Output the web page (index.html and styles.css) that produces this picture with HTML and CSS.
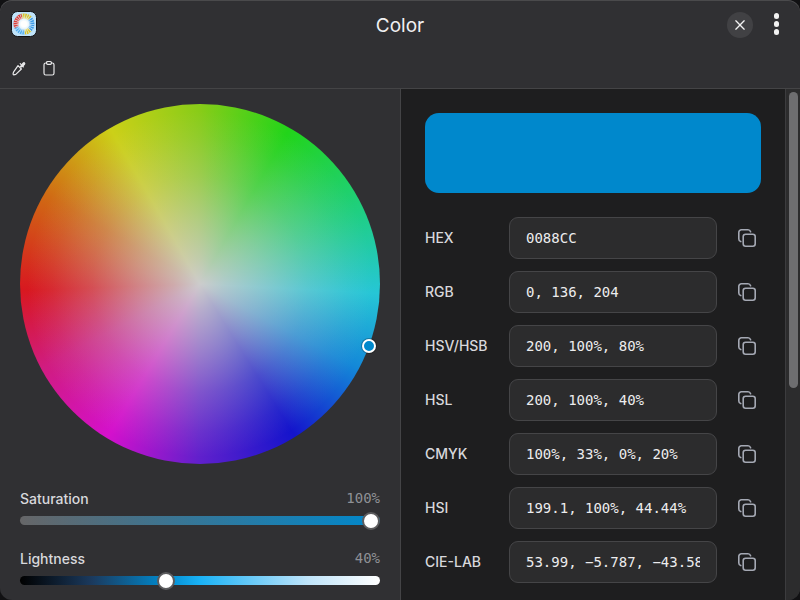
FILE: index.html
```html
<!DOCTYPE html>
<html lang="en">
<head>
<meta charset="utf-8">
<title>Color</title>
<link rel="stylesheet" href="styles.css">
</head>
<body>
<div class="window">
  <header class="titlebar">
    <div class="title-left">
      <svg class="app-icon" viewBox="0 0 26 26" width="26" height="26">
        <defs>
          <radialGradient id="glow">
            <stop offset="0.35" stop-color="#ffffff"/>
            <stop offset="1" stop-color="#ffffff" stop-opacity="0"/>
          </radialGradient>
        </defs>
        <rect x="0.5" y="0.5" width="25" height="25" rx="6" fill="#bfe3fa" stroke="#111113"/>
        <g fill="none" stroke-width="5">
          <circle cx="13" cy="13" r="8" stroke="#dc3b36" pathLength="100" stroke-dasharray="28 72" stroke-dashoffset="-43"/>
          <circle cx="13" cy="13" r="8" stroke="#d9c227" pathLength="100" stroke-dasharray="17 83" stroke-dashoffset="-71"/>
          <circle cx="13" cy="13" r="8" stroke="#3c9be8" pathLength="100" stroke-dasharray="24 76" stroke-dashoffset="12"/>
          <circle cx="13" cy="13" r="8" stroke="#d9c227" pathLength="100" stroke-dasharray="12 88" stroke-dashoffset="-12"/>
          <circle cx="13" cy="13" r="8" stroke="#52aef0" pathLength="100" stroke-dasharray="19 81" stroke-dashoffset="-24"/>
          <circle cx="13" cy="13" r="8" stroke="#d4ecfb" pathLength="50" stroke-dasharray="0.6 1.4"/>
        </g>
        <circle cx="13" cy="13" r="8" fill="url(#glow)"/>
      </svg>
    </div>
    <h1 class="title">Color</h1>
    <div class="title-actions">
      <button class="close" aria-label="Close">
        <svg viewBox="0 0 12 12" width="10" height="10"><path d="M1 1l10 10M11 1L1 11" stroke="#f2f2f2" stroke-width="1.6" stroke-linecap="round"/></svg>
      </button>
      <div class="kebab"><span></span><span></span><span></span></div>
    </div>
  </header>
  <div class="toolbar">
    <svg viewBox="0 0 16 16" width="16" height="16" fill="none" stroke="#e8e8ea" stroke-width="1.2" stroke-linejoin="round" stroke-linecap="round">
      <path d="M9.2 3.6l3.2 3.2M7 5.6l3.4 3.4-5.6 5.4-2.1.5-.7-.7.5-2.1z"/>
      <path d="M9.5 6.5l2-2.6c.8-1 1.4-1.5 2-1 .6.5.2 1.3-.7 2.1l-2.2 2z" fill="#e8e8ea"/>
    </svg>
    <svg viewBox="0 0 16 16" width="16" height="16" fill="none" stroke="#e8e8ea" stroke-width="1.2" stroke-linejoin="round">
      <rect x="3" y="3" width="10" height="12" rx="1.8"/>
      <rect x="5.6" y="1.5" width="4.8" height="2.8" rx="1" fill="#303033"/>
    </svg>
  </div>
  <main class="content">
    <section class="picker">
      <div class="wheel"><span class="wheel-handle"></span></div>
      <div class="slider-block sat">
        <div class="slider-head"><span>Saturation</span><span class="slider-val">100%</span></div>
        <div class="track track-sat"><span class="thumb thumb-sat"></span></div>
      </div>
      <div class="slider-block">
        <div class="slider-head"><span>Lightness</span><span class="slider-val">40%</span></div>
        <div class="track track-light"><span class="thumb thumb-light"></span></div>
      </div>
    </section>
    <section class="values">
      <div class="swatch"></div>
      <div class="rows">
        <div class="row"><label>HEX</label><input readonly value="0088CC"><svg class="copy" viewBox="0 0 20 20"><use href="#copy"/></svg></div>
        <div class="row"><label>RGB</label><input readonly value="0, 136, 204"><svg class="copy" viewBox="0 0 20 20"><use href="#copy"/></svg></div>
        <div class="row"><label>HSV/HSB</label><input readonly value="200, 100%, 80%"><svg class="copy" viewBox="0 0 20 20"><use href="#copy"/></svg></div>
        <div class="row"><label>HSL</label><input readonly value="200, 100%, 40%"><svg class="copy" viewBox="0 0 20 20"><use href="#copy"/></svg></div>
        <div class="row"><label>CMYK</label><input readonly value="100%, 33%, 0%, 20%"><svg class="copy" viewBox="0 0 20 20"><use href="#copy"/></svg></div>
        <div class="row"><label>HSI</label><input readonly value="199.1, 100%, 44.44%"><svg class="copy" viewBox="0 0 20 20"><use href="#copy"/></svg></div>
        <div class="row"><label>CIE-LAB</label><input readonly value="53.99, −5.787, −43.58"><svg class="copy" viewBox="0 0 20 20"><use href="#copy"/></svg></div>
      </div>
    </section>
    <div class="scrollbar"><span class="scroll-thumb"></span></div>
  </main>
</div>
<svg class="defs" width="0" height="0">
  <defs>
    <g id="copy" fill="none" stroke="#a5a9b4" stroke-width="1.6" stroke-linejoin="round" stroke-linecap="round">
      <rect x="6.2" y="6.2" width="12" height="12" rx="2.4"/>
      <path d="M3.8 13.6c-1.2-.4-2-1.4-2-2.6V4.4C1.8 3 3 1.800 4.4 1.800H11c1.200 0 2.200.8 2.600 2"/>
    </g>
  </defs>
</svg>
</body>
</html>
```
FILE: styles.css
```css
* { box-sizing: border-box; }
html, body { margin: 0; height: 100%; background: #111113; overflow: hidden; }
.window {
  width: 800px; height: 600px; display: flex; flex-direction: column;
  background: #303033; border-radius: 12px; overflow: hidden;
  font-family: Inter, "Liberation Sans", sans-serif; color: #e6e6e8;
  box-shadow: inset 0 1px 0 #4a4a4c;
}
.titlebar { height: 50px; flex: none; display: grid; grid-template-columns: 1fr auto 1fr; align-items: center; padding: 0 11px; }
.title-left { display: flex; align-items: center; margin-top: -2px; }
.app-icon { display: block; flex: none; }
.title { margin: 0; text-align: center; font-size: 19px; font-weight: 400; color: #f0f0f2; }
.title-actions { display: flex; align-items: center; justify-content: flex-end; gap: 21px; margin-right: 10px; }
.close { width: 26px; height: 26px; border: 0; padding: 0; border-radius: 50%; background: #414144; display: flex; align-items: center; justify-content: center; }
.kebab { display: flex; flex-direction: column; gap: 2.5px; margin-top: -2px; }
.kebab span { width: 5.5px; height: 5.5px; border-radius: 50%; background: #f2f2f2; }
.toolbar { height: 39px; flex: none; display: flex; align-items: center; gap: 14px; padding: 0 11px 3px; border-bottom: 1px solid #444446; }
.content { flex: 1; min-height: 0; display: flex; }
.picker { flex: none; width: 401px; padding: 15px 20px 0; border-right: 1px solid #444446; }
.wheel {
  width: 360px; height: 360px; border-radius: 50%; position: relative;
  background:
    radial-gradient(circle closest-side, #cccccc 0, rgba(204,204,204,.82) 14%, rgba(204,204,204,.58) 36%, rgba(204,204,204,.3) 60%, rgba(204,204,204,.1) 82%, rgba(204,204,204,0) 96%),
    conic-gradient(from 30deg, #22d41a, #1fcf80 35deg, #26c6d6 63deg, #1488d8 88deg, #1414cc 118deg, #6020cc 150deg, #d410cc 181deg, #d01c80 212deg, #d81820 238deg, #d06a14 270deg, #ccd018 300deg, #88cc18 330deg, #22d41a 360deg);
}
.wheel-handle { position: absolute; left: 342px; top: 235px; width: 14px; height: 14px; border-radius: 50%; background: #0088cc; border: 2px solid #fff; box-shadow: 0 0 0 1px rgba(0,0,0,.25); }
.slider-block { margin-top: 23px; }
.slider-block.sat { margin-top: 24px; }
.slider-head { display: flex; justify-content: space-between; align-items: center; height: 20px; font-size: 14px; font-weight: 500; color: #d8d8dc; }
.slider-val { font-family: "DejaVu Sans Mono", monospace; font-size: 14px; font-weight: 400; color: #8f9096; }
.track { position: relative; height: 9px; margin-top: 8px; border-radius: 5px; }
.track-sat { background: linear-gradient(90deg, #666668, #0088cc); }
.track-light { background: linear-gradient(90deg, #000, #1b3a5e 20%, #0088cc 40%, #1ab2f6 50%, #bfe4fa 80%, #fff); }
.thumb { position: absolute; top: 50%; width: 18px; height: 18px; margin-top: -9px; border-radius: 50%; background: #fff; border: 2px solid #5c5c5e; }
.thumb-sat { right: 0; }
.thumb-light { left: 137px; }
.values { flex: 1; min-width: 0; background: #1e1e1f; padding: 24px 24px 0; overflow: hidden; }
.swatch { height: 80px; border-radius: 14px; background: #0088cc; }
.rows { margin-top: 24px; display: flex; flex-direction: column; gap: 12px; }
.row { display: flex; align-items: center; height: 42px; }
.row label { width: 84px; flex: none; padding-bottom: 2px; font-size: 14px; font-weight: 500; color: #d8d8dc; }
.row input {
  width: 208px; height: 42px; flex: none; padding: 0 16px; border: 1px solid #454547; border-radius: 9px;
  background: #2c2c2d; color: #ececee; font-family: "DejaVu Sans Mono", monospace; font-size: 14px; outline: none;
}
.copy { width: 20px; height: 20px; margin-left: 20px; flex: none; }
.scrollbar { width: 15px; flex: none; background: #2c2c2d; border-left: 1px solid #3c3c3e; padding: 3px 2px 0 3px; }
.scroll-thumb { display: block; width: 9px; height: 296px; border-radius: 5px; background: #6e6e70; }
.defs { position: absolute; }
```
